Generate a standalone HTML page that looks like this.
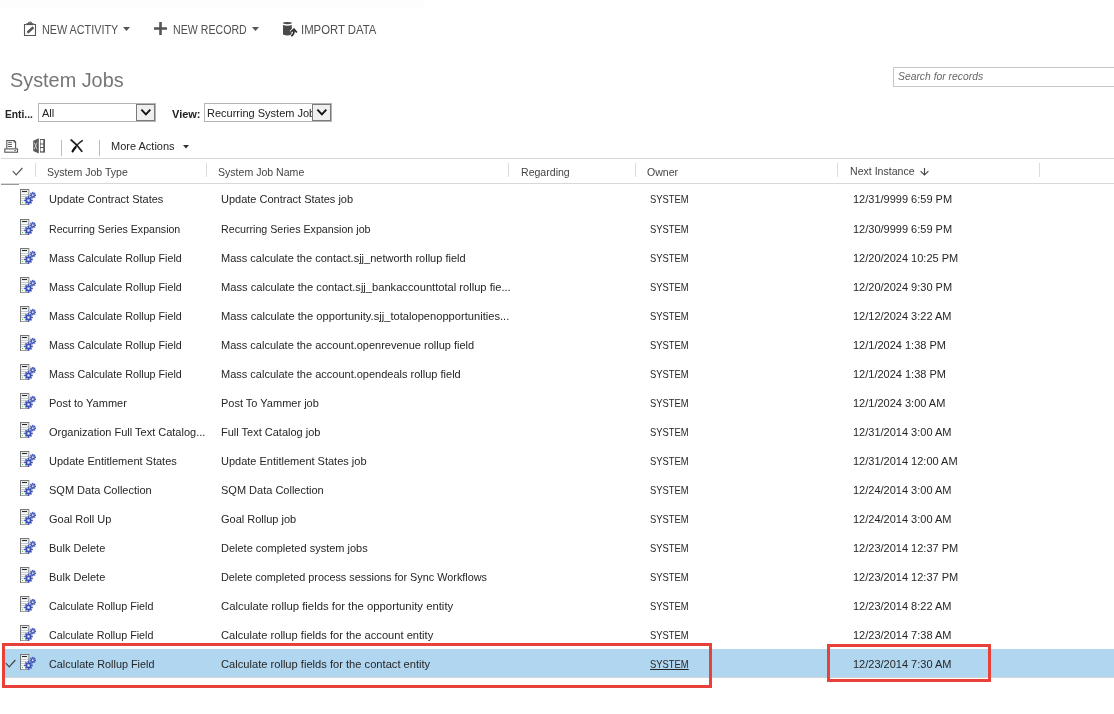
<!DOCTYPE html>
<html><head><meta charset="utf-8">
<style>
html,body{margin:0;padding:0;background:#fff;}
body{width:1114px;height:714px;position:relative;overflow:hidden;font-family:"Liberation Sans",sans-serif;}
.a{position:absolute;white-space:nowrap;}
.topband{position:absolute;left:0;top:0;width:424px;height:8px;background:#fdfdfd;}
.tb{position:absolute;top:24px;font-size:12px;color:#505050;line-height:13px;}
.title{position:absolute;left:10px;top:68px;font-size:21px;color:#767676;line-height:24px;transform:scaleX(0.945);transform-origin:0 0;white-space:nowrap}
.search{position:absolute;left:893px;top:67px;width:230px;height:20px;border:1px solid #c6c6c6;box-sizing:border-box;}
.search span{position:absolute;left:4px;top:2px;font-size:11px;font-style:italic;color:#666;transform:scaleX(0.94);transform-origin:0 0;white-space:nowrap}
.lbl{position:absolute;font-size:11px;font-weight:bold;color:#222;top:108px;}
.sel{position:absolute;top:103px;height:19px;border:1px solid #b4b4b4;box-sizing:border-box;background:#fff;}
.sel .v{position:absolute;left:3px;top:3px;font-size:11px;color:#222;white-space:nowrap;overflow:hidden;}
.sel .btn svg{display:block;position:absolute;left:0px;top:0px}
.sel .btn{position:absolute;right:0;top:0;width:19px;height:17px;border:1px solid #7a7a7a;background:#efefef;box-sizing:border-box;}
.hline{position:absolute;left:1px;width:1113px;height:1px;background:#d8d8d8;}
.hdr{position:absolute;top:166px;font-size:11px;color:#444;line-height:13px;transform:scaleX(0.96);transform-origin:0 0;white-space:nowrap}
.div{position:absolute;top:163px;width:1px;height:14px;background:#dcdcdc;}
.c{position:absolute;font-size:11px;color:#262626;line-height:13px;white-space:nowrap;}
.c1{left:49px;}
.c2{left:221px;}
.c4{left:650px;transform:scaleX(0.855);transform-origin:0 0;}
.c5{left:853px;}
.und{text-decoration:underline;}
.ic{position:absolute;left:20px;width:16px;height:16px;}
.ic svg{display:block;}
.selbg{position:absolute;left:2px;width:1112px;height:28px;background:#b1d6f0;box-shadow:0 1px 0 #d4d4d4;}
.rchk{position:absolute;left:5px;}
.red{position:absolute;border:3px solid #e8413a;box-sizing:border-box;}
</style></head><body><div style="position:absolute;left:0;top:0;width:1114px;height:714px;will-change:transform">
<div class="topband"></div>

<!-- toolbar -->
<svg class="a" style="left:20px;top:16px" width="20" height="24" viewBox="0 0 20 24">
<path d="M6.5 8.5H4.5V19.5H15.5V8.5H13.5" fill="none" stroke="#555" stroke-width="1.1"/>
<rect x="6.3" y="7.2" width="7.4" height="1.9" fill="#555"/><path d="M7.8 7.4a2.2 1.9 0 0 1 4.4 0z" fill="#555"/><rect x="9.5" y="5.8" width="1" height="1" fill="#ccc"/>
<path d="M7.6 16.5L13.4 11.3" stroke="#555" stroke-width="2.5"/><path d="M6.2 17.8L8.2 15.3L8.9 16.1z" fill="#555"/></svg>
<div class="tb" style="left:42px;transform:scaleX(0.9);transform-origin:0 0">NEW ACTIVITY</div>
<svg class="a" style="left:123px;top:27px" width="7" height="4" viewBox="0 0 7 4"><path d="M0 0h7L3.5 4z" fill="#555"/></svg>

<svg class="a" style="left:154px;top:22px" width="13" height="13" viewBox="0 0 13 13"><path d="M6.5 0v13M0 6.5h13" stroke="#555" stroke-width="2.6"/></svg>
<div class="tb" style="left:173px;transform:scaleX(0.885);transform-origin:0 0">NEW RECORD</div>
<svg class="a" style="left:252px;top:27px" width="7" height="4" viewBox="0 0 7 4"><path d="M0 0h7L3.5 4z" fill="#555"/></svg>

<svg class="a" style="left:278px;top:16px" width="24" height="24" viewBox="0 0 24 24">
<ellipse cx="9.4" cy="7.1" rx="4.5" ry="1.15" fill="#4a4a4a"/>
<path d="M5 9.0Q9.4 10.6 13.8 9.0V18.6Q9.4 20.4 5 18.6Z" fill="#4a4a4a"/>
<g fill="none" stroke="#fff" stroke-width="3.4" stroke-linejoin="round"><path d="M13.2 19.9Q16 19 16 14.2"/><path d="M12.8 16.2L16 13.2L18.9 16.5"/></g>
<g fill="none" stroke="#2a2a2a" stroke-width="1.7" stroke-linejoin="miter"><path d="M13.2 19.9Q16 19 16 14.2"/><path d="M12.8 16.2L16 13.2L18.9 16.5"/></g>
</svg>
<div class="tb" style="left:301px;transform:scaleX(0.945);transform-origin:0 0">IMPORT DATA</div>

<div class="title">System Jobs</div>
<div class="search"><span>Search for records</span></div>

<div class="lbl" style="left:5px;transform:scaleX(0.93);transform-origin:0 0">Enti...</div>
<div class="sel" style="left:38px;width:118px"><span class="v" style="left:3px">All</span><div class="btn"><svg width="17" height="17" viewBox="0 0 17 17"><path d="M4.4 4.6l4.5 4.7L13.3 4.6" fill="none" stroke="#111" stroke-width="1.9"/></svg></div></div>
<div class="lbl" style="left:172px">View:</div>
<div class="sel" style="left:204px;width:128px"><span class="v" style="left:2px;width:105px">Recurring System Job</span><div class="btn"><svg width="17" height="17" viewBox="0 0 17 17"><path d="M4.4 4.6l4.5 4.7L13.3 4.6" fill="none" stroke="#111" stroke-width="1.9"/></svg></div></div>

<!-- toolbar 2 -->
<svg class="a" style="left:0px;top:134px" width="50" height="24" viewBox="0 0 50 24">
<path d="M6.8 14.5V6.5h7.2l1.6 1.6v6.4" fill="none" stroke="#555" stroke-width="1.1"/>
<path d="M13.6 6.3h0.8l1.4 1.4v0.8h-2.2z" fill="#555"/>
<rect x="8.1" y="7.8" width="3.8" height="1" fill="#555"/><rect x="8.1" y="9.9" width="3.8" height="1" fill="#555"/><rect x="8.1" y="12" width="3.8" height="1" fill="#555"/>
<rect x="4.8" y="14.9" width="12.7" height="3.3" fill="none" stroke="#555" stroke-width="1.1"/><rect x="14.3" y="16.1" width="1.6" height="0.9" fill="#555"/>
<path d="M33.2 6.7L38.8 4.3V19.5L33.2 17z" fill="#5a5a5a"/>
<path d="M34.3 8.6l2.7 6.6M37 8.6l-2.7 6.6" stroke="#d0d0d0" stroke-width="0.9"/>
<rect x="40" y="5" width="5" height="13.6" fill="#5a5a5a"/><rect x="40.6" y="6" width="2.6" height="3.5" fill="#fff"/><rect x="40.6" y="10.5" width="2.6" height="2.5" fill="#fff"/><rect x="40.6" y="14" width="2.6" height="3.3" fill="#fff"/>
</svg>
<div class="a" style="left:61px;top:140px;width:1px;height:16px;background:#b8bcc8"></div>
<svg class="a" style="left:64px;top:134px" width="26" height="24" viewBox="0 0 26 24"><path d="M7.2 6Q13.2 10.6 17.8 17.2" fill="none" stroke="#222" stroke-width="1.8" stroke-linecap="round"/><path d="M18.3 6.6Q11.5 11.2 8.6 17.4" fill="none" stroke="#222" stroke-width="1.5" stroke-linecap="round"/><path d="M11.5 13.5Q9.5 15.5 8.6 17.4" fill="none" stroke="#111" stroke-width="2.2" stroke-linecap="round"/></svg>
<div class="a" style="left:99px;top:140px;width:1px;height:16px;background:#b8bcc8"></div>
<div class="a" style="left:111px;top:140px;font-size:11px;color:#262626;line-height:13px">More Actions</div>
<svg class="a" style="left:183px;top:145px" width="6" height="4" viewBox="0 0 6 4"><path d="M0 0h6L3 3.5z" fill="#333"/></svg>
<svg class="a" style="left:12px;top:167px" width="11" height="9" viewBox="0 0 11 9"><path d="M0.8 4.2l3.4 3.6L10.4 1" fill="none" stroke="#555" stroke-width="1.2"/></svg>
<svg class="a" style="left:919px;top:167px" width="11" height="9" viewBox="0 0 11 9"><path d="M5.5 1v6.8M1.6 4.2l3.9 3.8 3.9-3.8" fill="none" stroke="#444" stroke-width="1.1"/></svg>
<div class="a" style="left:1px;top:183px;width:18px;height:2px;background:#999"></div>
<div class="hline" style="top:158px"></div>
<div class="hline" style="top:183px"></div>

<div class="hdr" style="left:47px">System Job Type</div>
<div class="hdr" style="left:218px">System Job Name</div>
<div class="hdr" style="left:521px">Regarding</div>
<div class="hdr" style="left:647px">Owner</div>
<div class="hdr" style="left:850px;top:165px">Next Instance</div>
<div class="div" style="left:35px"></div>
<div class="div" style="left:206px"></div>
<div class="div" style="left:508px"></div>
<div class="div" style="left:635px"></div>
<div class="div" style="left:837px"></div>
<div class="div" style="left:1039px"></div>

<div class="ic" style="top:189px"><svg width="16" height="16" viewBox="0 0 16 16"><rect x="0.5" y="0.5" width="8.3" height="15.3" fill="#fbfbfb" stroke="#777"/><rect x="1" y="1" width="7.3" height="3" fill="#e4eaee"/><rect x="2" y="2" width="5" height="1" fill="#2a2a2a"/><rect x="1" y="5" width="7.3" height="1" fill="#c2c9d0"/><rect x="1" y="7" width="7.3" height="1" fill="#c2c9d0"/><rect x="1" y="9" width="7.3" height="1" fill="#c2c9d0"/><rect x="1" y="11" width="7.3" height="1" fill="#cdd2d6"/><rect x="2" y="13" width="1" height="1" fill="#3c4"/><line x1="14.40" y1="6.20" x2="15.40" y2="6.20" stroke="#5566c4" stroke-width="1.0"/><circle cx="15.40" cy="6.20" r="0.75" fill="#3a4fb0"/><line x1="13.93" y1="7.33" x2="14.64" y2="8.04" stroke="#5566c4" stroke-width="1.0"/><circle cx="14.64" cy="8.04" r="0.75" fill="#3a4fb0"/><line x1="12.80" y1="7.80" x2="12.80" y2="8.80" stroke="#5566c4" stroke-width="1.0"/><circle cx="12.80" cy="8.80" r="0.75" fill="#3a4fb0"/><line x1="11.67" y1="7.33" x2="10.96" y2="8.04" stroke="#5566c4" stroke-width="1.0"/><circle cx="10.96" cy="8.04" r="0.75" fill="#3a4fb0"/><line x1="11.20" y1="6.20" x2="10.20" y2="6.20" stroke="#5566c4" stroke-width="1.0"/><circle cx="10.20" cy="6.20" r="0.75" fill="#3a4fb0"/><line x1="11.67" y1="5.07" x2="10.96" y2="4.36" stroke="#5566c4" stroke-width="1.0"/><circle cx="10.96" cy="4.36" r="0.75" fill="#3a4fb0"/><line x1="12.80" y1="4.60" x2="12.80" y2="3.60" stroke="#5566c4" stroke-width="1.0"/><circle cx="12.80" cy="3.60" r="0.75" fill="#3a4fb0"/><line x1="13.93" y1="5.07" x2="14.64" y2="4.36" stroke="#5566c4" stroke-width="1.0"/><circle cx="14.64" cy="4.36" r="0.75" fill="#3a4fb0"/><circle cx="12.8" cy="6.2" r="1.6" fill="#9ca9e4" stroke="#3a4fb0" stroke-width="1.0"/><circle cx="12.8" cy="6.2" r="0.6" fill="#fff"/><line x1="10.80" y1="11.40" x2="12.00" y2="11.40" stroke="#5566c4" stroke-width="1.0"/><circle cx="12.00" cy="11.40" r="0.9" fill="#3a4fb0"/><line x1="10.13" y1="13.03" x2="10.97" y2="13.87" stroke="#5566c4" stroke-width="1.0"/><circle cx="10.97" cy="13.87" r="0.9" fill="#3a4fb0"/><line x1="8.50" y1="13.70" x2="8.50" y2="14.90" stroke="#5566c4" stroke-width="1.0"/><circle cx="8.50" cy="14.90" r="0.9" fill="#3a4fb0"/><line x1="6.87" y1="13.03" x2="6.03" y2="13.87" stroke="#5566c4" stroke-width="1.0"/><circle cx="6.03" cy="13.87" r="0.9" fill="#3a4fb0"/><line x1="6.20" y1="11.40" x2="5.00" y2="11.40" stroke="#5566c4" stroke-width="1.0"/><circle cx="5.00" cy="11.40" r="0.9" fill="#3a4fb0"/><line x1="6.87" y1="9.77" x2="6.03" y2="8.93" stroke="#5566c4" stroke-width="1.0"/><circle cx="6.03" cy="8.93" r="0.9" fill="#3a4fb0"/><line x1="8.50" y1="9.10" x2="8.50" y2="7.90" stroke="#5566c4" stroke-width="1.0"/><circle cx="8.50" cy="7.90" r="0.9" fill="#3a4fb0"/><line x1="10.13" y1="9.77" x2="10.97" y2="8.93" stroke="#5566c4" stroke-width="1.0"/><circle cx="10.97" cy="8.93" r="0.9" fill="#3a4fb0"/><circle cx="8.5" cy="11.4" r="2.3" fill="#95a3e2" stroke="#3a4fb0" stroke-width="1.3"/><circle cx="8.5" cy="11.4" r="0.75" fill="#fff"/></svg></div>
<div class="c c1" style="top:193px">Update Contract States</div>
<div class="c c2" style="top:193px">Update Contract States job</div>
<div class="c c4" style="top:193px">SYSTEM</div>
<div class="c c5" style="top:193px">12/31/9999 6:59 PM</div>
<div class="ic" style="top:219px"><svg width="16" height="16" viewBox="0 0 16 16"><rect x="0.5" y="0.5" width="8.3" height="15.3" fill="#fbfbfb" stroke="#777"/><rect x="1" y="1" width="7.3" height="3" fill="#e4eaee"/><rect x="2" y="2" width="5" height="1" fill="#2a2a2a"/><rect x="1" y="5" width="7.3" height="1" fill="#c2c9d0"/><rect x="1" y="7" width="7.3" height="1" fill="#c2c9d0"/><rect x="1" y="9" width="7.3" height="1" fill="#c2c9d0"/><rect x="1" y="11" width="7.3" height="1" fill="#cdd2d6"/><rect x="2" y="13" width="1" height="1" fill="#3c4"/><line x1="14.40" y1="6.20" x2="15.40" y2="6.20" stroke="#5566c4" stroke-width="1.0"/><circle cx="15.40" cy="6.20" r="0.75" fill="#3a4fb0"/><line x1="13.93" y1="7.33" x2="14.64" y2="8.04" stroke="#5566c4" stroke-width="1.0"/><circle cx="14.64" cy="8.04" r="0.75" fill="#3a4fb0"/><line x1="12.80" y1="7.80" x2="12.80" y2="8.80" stroke="#5566c4" stroke-width="1.0"/><circle cx="12.80" cy="8.80" r="0.75" fill="#3a4fb0"/><line x1="11.67" y1="7.33" x2="10.96" y2="8.04" stroke="#5566c4" stroke-width="1.0"/><circle cx="10.96" cy="8.04" r="0.75" fill="#3a4fb0"/><line x1="11.20" y1="6.20" x2="10.20" y2="6.20" stroke="#5566c4" stroke-width="1.0"/><circle cx="10.20" cy="6.20" r="0.75" fill="#3a4fb0"/><line x1="11.67" y1="5.07" x2="10.96" y2="4.36" stroke="#5566c4" stroke-width="1.0"/><circle cx="10.96" cy="4.36" r="0.75" fill="#3a4fb0"/><line x1="12.80" y1="4.60" x2="12.80" y2="3.60" stroke="#5566c4" stroke-width="1.0"/><circle cx="12.80" cy="3.60" r="0.75" fill="#3a4fb0"/><line x1="13.93" y1="5.07" x2="14.64" y2="4.36" stroke="#5566c4" stroke-width="1.0"/><circle cx="14.64" cy="4.36" r="0.75" fill="#3a4fb0"/><circle cx="12.8" cy="6.2" r="1.6" fill="#9ca9e4" stroke="#3a4fb0" stroke-width="1.0"/><circle cx="12.8" cy="6.2" r="0.6" fill="#fff"/><line x1="10.80" y1="11.40" x2="12.00" y2="11.40" stroke="#5566c4" stroke-width="1.0"/><circle cx="12.00" cy="11.40" r="0.9" fill="#3a4fb0"/><line x1="10.13" y1="13.03" x2="10.97" y2="13.87" stroke="#5566c4" stroke-width="1.0"/><circle cx="10.97" cy="13.87" r="0.9" fill="#3a4fb0"/><line x1="8.50" y1="13.70" x2="8.50" y2="14.90" stroke="#5566c4" stroke-width="1.0"/><circle cx="8.50" cy="14.90" r="0.9" fill="#3a4fb0"/><line x1="6.87" y1="13.03" x2="6.03" y2="13.87" stroke="#5566c4" stroke-width="1.0"/><circle cx="6.03" cy="13.87" r="0.9" fill="#3a4fb0"/><line x1="6.20" y1="11.40" x2="5.00" y2="11.40" stroke="#5566c4" stroke-width="1.0"/><circle cx="5.00" cy="11.40" r="0.9" fill="#3a4fb0"/><line x1="6.87" y1="9.77" x2="6.03" y2="8.93" stroke="#5566c4" stroke-width="1.0"/><circle cx="6.03" cy="8.93" r="0.9" fill="#3a4fb0"/><line x1="8.50" y1="9.10" x2="8.50" y2="7.90" stroke="#5566c4" stroke-width="1.0"/><circle cx="8.50" cy="7.90" r="0.9" fill="#3a4fb0"/><line x1="10.13" y1="9.77" x2="10.97" y2="8.93" stroke="#5566c4" stroke-width="1.0"/><circle cx="10.97" cy="8.93" r="0.9" fill="#3a4fb0"/><circle cx="8.5" cy="11.4" r="2.3" fill="#95a3e2" stroke="#3a4fb0" stroke-width="1.3"/><circle cx="8.5" cy="11.4" r="0.75" fill="#fff"/></svg></div>
<div class="c c1" style="top:223px;transform:scaleX(0.9627);transform-origin:0 0">Recurring Series Expansion</div>
<div class="c c2" style="top:223px;transform:scaleX(0.9704);transform-origin:0 0">Recurring Series Expansion job</div>
<div class="c c4" style="top:223px">SYSTEM</div>
<div class="c c5" style="top:223px">12/30/9999 6:59 PM</div>
<div class="ic" style="top:248px"><svg width="16" height="16" viewBox="0 0 16 16"><rect x="0.5" y="0.5" width="8.3" height="15.3" fill="#fbfbfb" stroke="#777"/><rect x="1" y="1" width="7.3" height="3" fill="#e4eaee"/><rect x="2" y="2" width="5" height="1" fill="#2a2a2a"/><rect x="1" y="5" width="7.3" height="1" fill="#c2c9d0"/><rect x="1" y="7" width="7.3" height="1" fill="#c2c9d0"/><rect x="1" y="9" width="7.3" height="1" fill="#c2c9d0"/><rect x="1" y="11" width="7.3" height="1" fill="#cdd2d6"/><rect x="2" y="13" width="1" height="1" fill="#3c4"/><line x1="14.40" y1="6.20" x2="15.40" y2="6.20" stroke="#5566c4" stroke-width="1.0"/><circle cx="15.40" cy="6.20" r="0.75" fill="#3a4fb0"/><line x1="13.93" y1="7.33" x2="14.64" y2="8.04" stroke="#5566c4" stroke-width="1.0"/><circle cx="14.64" cy="8.04" r="0.75" fill="#3a4fb0"/><line x1="12.80" y1="7.80" x2="12.80" y2="8.80" stroke="#5566c4" stroke-width="1.0"/><circle cx="12.80" cy="8.80" r="0.75" fill="#3a4fb0"/><line x1="11.67" y1="7.33" x2="10.96" y2="8.04" stroke="#5566c4" stroke-width="1.0"/><circle cx="10.96" cy="8.04" r="0.75" fill="#3a4fb0"/><line x1="11.20" y1="6.20" x2="10.20" y2="6.20" stroke="#5566c4" stroke-width="1.0"/><circle cx="10.20" cy="6.20" r="0.75" fill="#3a4fb0"/><line x1="11.67" y1="5.07" x2="10.96" y2="4.36" stroke="#5566c4" stroke-width="1.0"/><circle cx="10.96" cy="4.36" r="0.75" fill="#3a4fb0"/><line x1="12.80" y1="4.60" x2="12.80" y2="3.60" stroke="#5566c4" stroke-width="1.0"/><circle cx="12.80" cy="3.60" r="0.75" fill="#3a4fb0"/><line x1="13.93" y1="5.07" x2="14.64" y2="4.36" stroke="#5566c4" stroke-width="1.0"/><circle cx="14.64" cy="4.36" r="0.75" fill="#3a4fb0"/><circle cx="12.8" cy="6.2" r="1.6" fill="#9ca9e4" stroke="#3a4fb0" stroke-width="1.0"/><circle cx="12.8" cy="6.2" r="0.6" fill="#fff"/><line x1="10.80" y1="11.40" x2="12.00" y2="11.40" stroke="#5566c4" stroke-width="1.0"/><circle cx="12.00" cy="11.40" r="0.9" fill="#3a4fb0"/><line x1="10.13" y1="13.03" x2="10.97" y2="13.87" stroke="#5566c4" stroke-width="1.0"/><circle cx="10.97" cy="13.87" r="0.9" fill="#3a4fb0"/><line x1="8.50" y1="13.70" x2="8.50" y2="14.90" stroke="#5566c4" stroke-width="1.0"/><circle cx="8.50" cy="14.90" r="0.9" fill="#3a4fb0"/><line x1="6.87" y1="13.03" x2="6.03" y2="13.87" stroke="#5566c4" stroke-width="1.0"/><circle cx="6.03" cy="13.87" r="0.9" fill="#3a4fb0"/><line x1="6.20" y1="11.40" x2="5.00" y2="11.40" stroke="#5566c4" stroke-width="1.0"/><circle cx="5.00" cy="11.40" r="0.9" fill="#3a4fb0"/><line x1="6.87" y1="9.77" x2="6.03" y2="8.93" stroke="#5566c4" stroke-width="1.0"/><circle cx="6.03" cy="8.93" r="0.9" fill="#3a4fb0"/><line x1="8.50" y1="9.10" x2="8.50" y2="7.90" stroke="#5566c4" stroke-width="1.0"/><circle cx="8.50" cy="7.90" r="0.9" fill="#3a4fb0"/><line x1="10.13" y1="9.77" x2="10.97" y2="8.93" stroke="#5566c4" stroke-width="1.0"/><circle cx="10.97" cy="8.93" r="0.9" fill="#3a4fb0"/><circle cx="8.5" cy="11.4" r="2.3" fill="#95a3e2" stroke="#3a4fb0" stroke-width="1.3"/><circle cx="8.5" cy="11.4" r="0.75" fill="#fff"/></svg></div>
<div class="c c1" style="top:252px;transform:scaleX(0.9739);transform-origin:0 0">Mass Calculate Rollup Field</div>
<div class="c c2" style="top:252px">Mass calculate the contact.sjj_networth rollup field</div>
<div class="c c4" style="top:252px">SYSTEM</div>
<div class="c c5" style="top:252px">12/20/2024 10:25 PM</div>
<div class="ic" style="top:277px"><svg width="16" height="16" viewBox="0 0 16 16"><rect x="0.5" y="0.5" width="8.3" height="15.3" fill="#fbfbfb" stroke="#777"/><rect x="1" y="1" width="7.3" height="3" fill="#e4eaee"/><rect x="2" y="2" width="5" height="1" fill="#2a2a2a"/><rect x="1" y="5" width="7.3" height="1" fill="#c2c9d0"/><rect x="1" y="7" width="7.3" height="1" fill="#c2c9d0"/><rect x="1" y="9" width="7.3" height="1" fill="#c2c9d0"/><rect x="1" y="11" width="7.3" height="1" fill="#cdd2d6"/><rect x="2" y="13" width="1" height="1" fill="#3c4"/><line x1="14.40" y1="6.20" x2="15.40" y2="6.20" stroke="#5566c4" stroke-width="1.0"/><circle cx="15.40" cy="6.20" r="0.75" fill="#3a4fb0"/><line x1="13.93" y1="7.33" x2="14.64" y2="8.04" stroke="#5566c4" stroke-width="1.0"/><circle cx="14.64" cy="8.04" r="0.75" fill="#3a4fb0"/><line x1="12.80" y1="7.80" x2="12.80" y2="8.80" stroke="#5566c4" stroke-width="1.0"/><circle cx="12.80" cy="8.80" r="0.75" fill="#3a4fb0"/><line x1="11.67" y1="7.33" x2="10.96" y2="8.04" stroke="#5566c4" stroke-width="1.0"/><circle cx="10.96" cy="8.04" r="0.75" fill="#3a4fb0"/><line x1="11.20" y1="6.20" x2="10.20" y2="6.20" stroke="#5566c4" stroke-width="1.0"/><circle cx="10.20" cy="6.20" r="0.75" fill="#3a4fb0"/><line x1="11.67" y1="5.07" x2="10.96" y2="4.36" stroke="#5566c4" stroke-width="1.0"/><circle cx="10.96" cy="4.36" r="0.75" fill="#3a4fb0"/><line x1="12.80" y1="4.60" x2="12.80" y2="3.60" stroke="#5566c4" stroke-width="1.0"/><circle cx="12.80" cy="3.60" r="0.75" fill="#3a4fb0"/><line x1="13.93" y1="5.07" x2="14.64" y2="4.36" stroke="#5566c4" stroke-width="1.0"/><circle cx="14.64" cy="4.36" r="0.75" fill="#3a4fb0"/><circle cx="12.8" cy="6.2" r="1.6" fill="#9ca9e4" stroke="#3a4fb0" stroke-width="1.0"/><circle cx="12.8" cy="6.2" r="0.6" fill="#fff"/><line x1="10.80" y1="11.40" x2="12.00" y2="11.40" stroke="#5566c4" stroke-width="1.0"/><circle cx="12.00" cy="11.40" r="0.9" fill="#3a4fb0"/><line x1="10.13" y1="13.03" x2="10.97" y2="13.87" stroke="#5566c4" stroke-width="1.0"/><circle cx="10.97" cy="13.87" r="0.9" fill="#3a4fb0"/><line x1="8.50" y1="13.70" x2="8.50" y2="14.90" stroke="#5566c4" stroke-width="1.0"/><circle cx="8.50" cy="14.90" r="0.9" fill="#3a4fb0"/><line x1="6.87" y1="13.03" x2="6.03" y2="13.87" stroke="#5566c4" stroke-width="1.0"/><circle cx="6.03" cy="13.87" r="0.9" fill="#3a4fb0"/><line x1="6.20" y1="11.40" x2="5.00" y2="11.40" stroke="#5566c4" stroke-width="1.0"/><circle cx="5.00" cy="11.40" r="0.9" fill="#3a4fb0"/><line x1="6.87" y1="9.77" x2="6.03" y2="8.93" stroke="#5566c4" stroke-width="1.0"/><circle cx="6.03" cy="8.93" r="0.9" fill="#3a4fb0"/><line x1="8.50" y1="9.10" x2="8.50" y2="7.90" stroke="#5566c4" stroke-width="1.0"/><circle cx="8.50" cy="7.90" r="0.9" fill="#3a4fb0"/><line x1="10.13" y1="9.77" x2="10.97" y2="8.93" stroke="#5566c4" stroke-width="1.0"/><circle cx="10.97" cy="8.93" r="0.9" fill="#3a4fb0"/><circle cx="8.5" cy="11.4" r="2.3" fill="#95a3e2" stroke="#3a4fb0" stroke-width="1.3"/><circle cx="8.5" cy="11.4" r="0.75" fill="#fff"/></svg></div>
<div class="c c1" style="top:281px;transform:scaleX(0.9739);transform-origin:0 0">Mass Calculate Rollup Field</div>
<div class="c c2" style="top:281px;transform:scaleX(1.0124);transform-origin:0 0">Mass calculate the contact.sjj_bankaccounttotal rollup fie...</div>
<div class="c c4" style="top:281px">SYSTEM</div>
<div class="c c5" style="top:281px">12/20/2024 9:30 PM</div>
<div class="ic" style="top:306px"><svg width="16" height="16" viewBox="0 0 16 16"><rect x="0.5" y="0.5" width="8.3" height="15.3" fill="#fbfbfb" stroke="#777"/><rect x="1" y="1" width="7.3" height="3" fill="#e4eaee"/><rect x="2" y="2" width="5" height="1" fill="#2a2a2a"/><rect x="1" y="5" width="7.3" height="1" fill="#c2c9d0"/><rect x="1" y="7" width="7.3" height="1" fill="#c2c9d0"/><rect x="1" y="9" width="7.3" height="1" fill="#c2c9d0"/><rect x="1" y="11" width="7.3" height="1" fill="#cdd2d6"/><rect x="2" y="13" width="1" height="1" fill="#3c4"/><line x1="14.40" y1="6.20" x2="15.40" y2="6.20" stroke="#5566c4" stroke-width="1.0"/><circle cx="15.40" cy="6.20" r="0.75" fill="#3a4fb0"/><line x1="13.93" y1="7.33" x2="14.64" y2="8.04" stroke="#5566c4" stroke-width="1.0"/><circle cx="14.64" cy="8.04" r="0.75" fill="#3a4fb0"/><line x1="12.80" y1="7.80" x2="12.80" y2="8.80" stroke="#5566c4" stroke-width="1.0"/><circle cx="12.80" cy="8.80" r="0.75" fill="#3a4fb0"/><line x1="11.67" y1="7.33" x2="10.96" y2="8.04" stroke="#5566c4" stroke-width="1.0"/><circle cx="10.96" cy="8.04" r="0.75" fill="#3a4fb0"/><line x1="11.20" y1="6.20" x2="10.20" y2="6.20" stroke="#5566c4" stroke-width="1.0"/><circle cx="10.20" cy="6.20" r="0.75" fill="#3a4fb0"/><line x1="11.67" y1="5.07" x2="10.96" y2="4.36" stroke="#5566c4" stroke-width="1.0"/><circle cx="10.96" cy="4.36" r="0.75" fill="#3a4fb0"/><line x1="12.80" y1="4.60" x2="12.80" y2="3.60" stroke="#5566c4" stroke-width="1.0"/><circle cx="12.80" cy="3.60" r="0.75" fill="#3a4fb0"/><line x1="13.93" y1="5.07" x2="14.64" y2="4.36" stroke="#5566c4" stroke-width="1.0"/><circle cx="14.64" cy="4.36" r="0.75" fill="#3a4fb0"/><circle cx="12.8" cy="6.2" r="1.6" fill="#9ca9e4" stroke="#3a4fb0" stroke-width="1.0"/><circle cx="12.8" cy="6.2" r="0.6" fill="#fff"/><line x1="10.80" y1="11.40" x2="12.00" y2="11.40" stroke="#5566c4" stroke-width="1.0"/><circle cx="12.00" cy="11.40" r="0.9" fill="#3a4fb0"/><line x1="10.13" y1="13.03" x2="10.97" y2="13.87" stroke="#5566c4" stroke-width="1.0"/><circle cx="10.97" cy="13.87" r="0.9" fill="#3a4fb0"/><line x1="8.50" y1="13.70" x2="8.50" y2="14.90" stroke="#5566c4" stroke-width="1.0"/><circle cx="8.50" cy="14.90" r="0.9" fill="#3a4fb0"/><line x1="6.87" y1="13.03" x2="6.03" y2="13.87" stroke="#5566c4" stroke-width="1.0"/><circle cx="6.03" cy="13.87" r="0.9" fill="#3a4fb0"/><line x1="6.20" y1="11.40" x2="5.00" y2="11.40" stroke="#5566c4" stroke-width="1.0"/><circle cx="5.00" cy="11.40" r="0.9" fill="#3a4fb0"/><line x1="6.87" y1="9.77" x2="6.03" y2="8.93" stroke="#5566c4" stroke-width="1.0"/><circle cx="6.03" cy="8.93" r="0.9" fill="#3a4fb0"/><line x1="8.50" y1="9.10" x2="8.50" y2="7.90" stroke="#5566c4" stroke-width="1.0"/><circle cx="8.50" cy="7.90" r="0.9" fill="#3a4fb0"/><line x1="10.13" y1="9.77" x2="10.97" y2="8.93" stroke="#5566c4" stroke-width="1.0"/><circle cx="10.97" cy="8.93" r="0.9" fill="#3a4fb0"/><circle cx="8.5" cy="11.4" r="2.3" fill="#95a3e2" stroke="#3a4fb0" stroke-width="1.3"/><circle cx="8.5" cy="11.4" r="0.75" fill="#fff"/></svg></div>
<div class="c c1" style="top:310px;transform:scaleX(0.9739);transform-origin:0 0">Mass Calculate Rollup Field</div>
<div class="c c2" style="top:310px;transform:scaleX(1.0124);transform-origin:0 0">Mass calculate the opportunity.sjj_totalopenopportunities...</div>
<div class="c c4" style="top:310px">SYSTEM</div>
<div class="c c5" style="top:310px">12/12/2024 3:22 AM</div>
<div class="ic" style="top:335px"><svg width="16" height="16" viewBox="0 0 16 16"><rect x="0.5" y="0.5" width="8.3" height="15.3" fill="#fbfbfb" stroke="#777"/><rect x="1" y="1" width="7.3" height="3" fill="#e4eaee"/><rect x="2" y="2" width="5" height="1" fill="#2a2a2a"/><rect x="1" y="5" width="7.3" height="1" fill="#c2c9d0"/><rect x="1" y="7" width="7.3" height="1" fill="#c2c9d0"/><rect x="1" y="9" width="7.3" height="1" fill="#c2c9d0"/><rect x="1" y="11" width="7.3" height="1" fill="#cdd2d6"/><rect x="2" y="13" width="1" height="1" fill="#3c4"/><line x1="14.40" y1="6.20" x2="15.40" y2="6.20" stroke="#5566c4" stroke-width="1.0"/><circle cx="15.40" cy="6.20" r="0.75" fill="#3a4fb0"/><line x1="13.93" y1="7.33" x2="14.64" y2="8.04" stroke="#5566c4" stroke-width="1.0"/><circle cx="14.64" cy="8.04" r="0.75" fill="#3a4fb0"/><line x1="12.80" y1="7.80" x2="12.80" y2="8.80" stroke="#5566c4" stroke-width="1.0"/><circle cx="12.80" cy="8.80" r="0.75" fill="#3a4fb0"/><line x1="11.67" y1="7.33" x2="10.96" y2="8.04" stroke="#5566c4" stroke-width="1.0"/><circle cx="10.96" cy="8.04" r="0.75" fill="#3a4fb0"/><line x1="11.20" y1="6.20" x2="10.20" y2="6.20" stroke="#5566c4" stroke-width="1.0"/><circle cx="10.20" cy="6.20" r="0.75" fill="#3a4fb0"/><line x1="11.67" y1="5.07" x2="10.96" y2="4.36" stroke="#5566c4" stroke-width="1.0"/><circle cx="10.96" cy="4.36" r="0.75" fill="#3a4fb0"/><line x1="12.80" y1="4.60" x2="12.80" y2="3.60" stroke="#5566c4" stroke-width="1.0"/><circle cx="12.80" cy="3.60" r="0.75" fill="#3a4fb0"/><line x1="13.93" y1="5.07" x2="14.64" y2="4.36" stroke="#5566c4" stroke-width="1.0"/><circle cx="14.64" cy="4.36" r="0.75" fill="#3a4fb0"/><circle cx="12.8" cy="6.2" r="1.6" fill="#9ca9e4" stroke="#3a4fb0" stroke-width="1.0"/><circle cx="12.8" cy="6.2" r="0.6" fill="#fff"/><line x1="10.80" y1="11.40" x2="12.00" y2="11.40" stroke="#5566c4" stroke-width="1.0"/><circle cx="12.00" cy="11.40" r="0.9" fill="#3a4fb0"/><line x1="10.13" y1="13.03" x2="10.97" y2="13.87" stroke="#5566c4" stroke-width="1.0"/><circle cx="10.97" cy="13.87" r="0.9" fill="#3a4fb0"/><line x1="8.50" y1="13.70" x2="8.50" y2="14.90" stroke="#5566c4" stroke-width="1.0"/><circle cx="8.50" cy="14.90" r="0.9" fill="#3a4fb0"/><line x1="6.87" y1="13.03" x2="6.03" y2="13.87" stroke="#5566c4" stroke-width="1.0"/><circle cx="6.03" cy="13.87" r="0.9" fill="#3a4fb0"/><line x1="6.20" y1="11.40" x2="5.00" y2="11.40" stroke="#5566c4" stroke-width="1.0"/><circle cx="5.00" cy="11.40" r="0.9" fill="#3a4fb0"/><line x1="6.87" y1="9.77" x2="6.03" y2="8.93" stroke="#5566c4" stroke-width="1.0"/><circle cx="6.03" cy="8.93" r="0.9" fill="#3a4fb0"/><line x1="8.50" y1="9.10" x2="8.50" y2="7.90" stroke="#5566c4" stroke-width="1.0"/><circle cx="8.50" cy="7.90" r="0.9" fill="#3a4fb0"/><line x1="10.13" y1="9.77" x2="10.97" y2="8.93" stroke="#5566c4" stroke-width="1.0"/><circle cx="10.97" cy="8.93" r="0.9" fill="#3a4fb0"/><circle cx="8.5" cy="11.4" r="2.3" fill="#95a3e2" stroke="#3a4fb0" stroke-width="1.3"/><circle cx="8.5" cy="11.4" r="0.75" fill="#fff"/></svg></div>
<div class="c c1" style="top:339px;transform:scaleX(0.9739);transform-origin:0 0">Mass Calculate Rollup Field</div>
<div class="c c2" style="top:339px">Mass calculate the account.openrevenue rollup field</div>
<div class="c c4" style="top:339px">SYSTEM</div>
<div class="c c5" style="top:339px">12/1/2024 1:38 PM</div>
<div class="ic" style="top:364px"><svg width="16" height="16" viewBox="0 0 16 16"><rect x="0.5" y="0.5" width="8.3" height="15.3" fill="#fbfbfb" stroke="#777"/><rect x="1" y="1" width="7.3" height="3" fill="#e4eaee"/><rect x="2" y="2" width="5" height="1" fill="#2a2a2a"/><rect x="1" y="5" width="7.3" height="1" fill="#c2c9d0"/><rect x="1" y="7" width="7.3" height="1" fill="#c2c9d0"/><rect x="1" y="9" width="7.3" height="1" fill="#c2c9d0"/><rect x="1" y="11" width="7.3" height="1" fill="#cdd2d6"/><rect x="2" y="13" width="1" height="1" fill="#3c4"/><line x1="14.40" y1="6.20" x2="15.40" y2="6.20" stroke="#5566c4" stroke-width="1.0"/><circle cx="15.40" cy="6.20" r="0.75" fill="#3a4fb0"/><line x1="13.93" y1="7.33" x2="14.64" y2="8.04" stroke="#5566c4" stroke-width="1.0"/><circle cx="14.64" cy="8.04" r="0.75" fill="#3a4fb0"/><line x1="12.80" y1="7.80" x2="12.80" y2="8.80" stroke="#5566c4" stroke-width="1.0"/><circle cx="12.80" cy="8.80" r="0.75" fill="#3a4fb0"/><line x1="11.67" y1="7.33" x2="10.96" y2="8.04" stroke="#5566c4" stroke-width="1.0"/><circle cx="10.96" cy="8.04" r="0.75" fill="#3a4fb0"/><line x1="11.20" y1="6.20" x2="10.20" y2="6.20" stroke="#5566c4" stroke-width="1.0"/><circle cx="10.20" cy="6.20" r="0.75" fill="#3a4fb0"/><line x1="11.67" y1="5.07" x2="10.96" y2="4.36" stroke="#5566c4" stroke-width="1.0"/><circle cx="10.96" cy="4.36" r="0.75" fill="#3a4fb0"/><line x1="12.80" y1="4.60" x2="12.80" y2="3.60" stroke="#5566c4" stroke-width="1.0"/><circle cx="12.80" cy="3.60" r="0.75" fill="#3a4fb0"/><line x1="13.93" y1="5.07" x2="14.64" y2="4.36" stroke="#5566c4" stroke-width="1.0"/><circle cx="14.64" cy="4.36" r="0.75" fill="#3a4fb0"/><circle cx="12.8" cy="6.2" r="1.6" fill="#9ca9e4" stroke="#3a4fb0" stroke-width="1.0"/><circle cx="12.8" cy="6.2" r="0.6" fill="#fff"/><line x1="10.80" y1="11.40" x2="12.00" y2="11.40" stroke="#5566c4" stroke-width="1.0"/><circle cx="12.00" cy="11.40" r="0.9" fill="#3a4fb0"/><line x1="10.13" y1="13.03" x2="10.97" y2="13.87" stroke="#5566c4" stroke-width="1.0"/><circle cx="10.97" cy="13.87" r="0.9" fill="#3a4fb0"/><line x1="8.50" y1="13.70" x2="8.50" y2="14.90" stroke="#5566c4" stroke-width="1.0"/><circle cx="8.50" cy="14.90" r="0.9" fill="#3a4fb0"/><line x1="6.87" y1="13.03" x2="6.03" y2="13.87" stroke="#5566c4" stroke-width="1.0"/><circle cx="6.03" cy="13.87" r="0.9" fill="#3a4fb0"/><line x1="6.20" y1="11.40" x2="5.00" y2="11.40" stroke="#5566c4" stroke-width="1.0"/><circle cx="5.00" cy="11.40" r="0.9" fill="#3a4fb0"/><line x1="6.87" y1="9.77" x2="6.03" y2="8.93" stroke="#5566c4" stroke-width="1.0"/><circle cx="6.03" cy="8.93" r="0.9" fill="#3a4fb0"/><line x1="8.50" y1="9.10" x2="8.50" y2="7.90" stroke="#5566c4" stroke-width="1.0"/><circle cx="8.50" cy="7.90" r="0.9" fill="#3a4fb0"/><line x1="10.13" y1="9.77" x2="10.97" y2="8.93" stroke="#5566c4" stroke-width="1.0"/><circle cx="10.97" cy="8.93" r="0.9" fill="#3a4fb0"/><circle cx="8.5" cy="11.4" r="2.3" fill="#95a3e2" stroke="#3a4fb0" stroke-width="1.3"/><circle cx="8.5" cy="11.4" r="0.75" fill="#fff"/></svg></div>
<div class="c c1" style="top:368px;transform:scaleX(0.9739);transform-origin:0 0">Mass Calculate Rollup Field</div>
<div class="c c2" style="top:368px">Mass calculate the account.opendeals rollup field</div>
<div class="c c4" style="top:368px">SYSTEM</div>
<div class="c c5" style="top:368px">12/1/2024 1:38 PM</div>
<div class="ic" style="top:393px"><svg width="16" height="16" viewBox="0 0 16 16"><rect x="0.5" y="0.5" width="8.3" height="15.3" fill="#fbfbfb" stroke="#777"/><rect x="1" y="1" width="7.3" height="3" fill="#e4eaee"/><rect x="2" y="2" width="5" height="1" fill="#2a2a2a"/><rect x="1" y="5" width="7.3" height="1" fill="#c2c9d0"/><rect x="1" y="7" width="7.3" height="1" fill="#c2c9d0"/><rect x="1" y="9" width="7.3" height="1" fill="#c2c9d0"/><rect x="1" y="11" width="7.3" height="1" fill="#cdd2d6"/><rect x="2" y="13" width="1" height="1" fill="#3c4"/><line x1="14.40" y1="6.20" x2="15.40" y2="6.20" stroke="#5566c4" stroke-width="1.0"/><circle cx="15.40" cy="6.20" r="0.75" fill="#3a4fb0"/><line x1="13.93" y1="7.33" x2="14.64" y2="8.04" stroke="#5566c4" stroke-width="1.0"/><circle cx="14.64" cy="8.04" r="0.75" fill="#3a4fb0"/><line x1="12.80" y1="7.80" x2="12.80" y2="8.80" stroke="#5566c4" stroke-width="1.0"/><circle cx="12.80" cy="8.80" r="0.75" fill="#3a4fb0"/><line x1="11.67" y1="7.33" x2="10.96" y2="8.04" stroke="#5566c4" stroke-width="1.0"/><circle cx="10.96" cy="8.04" r="0.75" fill="#3a4fb0"/><line x1="11.20" y1="6.20" x2="10.20" y2="6.20" stroke="#5566c4" stroke-width="1.0"/><circle cx="10.20" cy="6.20" r="0.75" fill="#3a4fb0"/><line x1="11.67" y1="5.07" x2="10.96" y2="4.36" stroke="#5566c4" stroke-width="1.0"/><circle cx="10.96" cy="4.36" r="0.75" fill="#3a4fb0"/><line x1="12.80" y1="4.60" x2="12.80" y2="3.60" stroke="#5566c4" stroke-width="1.0"/><circle cx="12.80" cy="3.60" r="0.75" fill="#3a4fb0"/><line x1="13.93" y1="5.07" x2="14.64" y2="4.36" stroke="#5566c4" stroke-width="1.0"/><circle cx="14.64" cy="4.36" r="0.75" fill="#3a4fb0"/><circle cx="12.8" cy="6.2" r="1.6" fill="#9ca9e4" stroke="#3a4fb0" stroke-width="1.0"/><circle cx="12.8" cy="6.2" r="0.6" fill="#fff"/><line x1="10.80" y1="11.40" x2="12.00" y2="11.40" stroke="#5566c4" stroke-width="1.0"/><circle cx="12.00" cy="11.40" r="0.9" fill="#3a4fb0"/><line x1="10.13" y1="13.03" x2="10.97" y2="13.87" stroke="#5566c4" stroke-width="1.0"/><circle cx="10.97" cy="13.87" r="0.9" fill="#3a4fb0"/><line x1="8.50" y1="13.70" x2="8.50" y2="14.90" stroke="#5566c4" stroke-width="1.0"/><circle cx="8.50" cy="14.90" r="0.9" fill="#3a4fb0"/><line x1="6.87" y1="13.03" x2="6.03" y2="13.87" stroke="#5566c4" stroke-width="1.0"/><circle cx="6.03" cy="13.87" r="0.9" fill="#3a4fb0"/><line x1="6.20" y1="11.40" x2="5.00" y2="11.40" stroke="#5566c4" stroke-width="1.0"/><circle cx="5.00" cy="11.40" r="0.9" fill="#3a4fb0"/><line x1="6.87" y1="9.77" x2="6.03" y2="8.93" stroke="#5566c4" stroke-width="1.0"/><circle cx="6.03" cy="8.93" r="0.9" fill="#3a4fb0"/><line x1="8.50" y1="9.10" x2="8.50" y2="7.90" stroke="#5566c4" stroke-width="1.0"/><circle cx="8.50" cy="7.90" r="0.9" fill="#3a4fb0"/><line x1="10.13" y1="9.77" x2="10.97" y2="8.93" stroke="#5566c4" stroke-width="1.0"/><circle cx="10.97" cy="8.93" r="0.9" fill="#3a4fb0"/><circle cx="8.5" cy="11.4" r="2.3" fill="#95a3e2" stroke="#3a4fb0" stroke-width="1.3"/><circle cx="8.5" cy="11.4" r="0.75" fill="#fff"/></svg></div>
<div class="c c1" style="top:397px">Post to Yammer</div>
<div class="c c2" style="top:397px">Post To Yammer job</div>
<div class="c c4" style="top:397px">SYSTEM</div>
<div class="c c5" style="top:397px">12/1/2024 3:00 AM</div>
<div class="ic" style="top:422px"><svg width="16" height="16" viewBox="0 0 16 16"><rect x="0.5" y="0.5" width="8.3" height="15.3" fill="#fbfbfb" stroke="#777"/><rect x="1" y="1" width="7.3" height="3" fill="#e4eaee"/><rect x="2" y="2" width="5" height="1" fill="#2a2a2a"/><rect x="1" y="5" width="7.3" height="1" fill="#c2c9d0"/><rect x="1" y="7" width="7.3" height="1" fill="#c2c9d0"/><rect x="1" y="9" width="7.3" height="1" fill="#c2c9d0"/><rect x="1" y="11" width="7.3" height="1" fill="#cdd2d6"/><rect x="2" y="13" width="1" height="1" fill="#3c4"/><line x1="14.40" y1="6.20" x2="15.40" y2="6.20" stroke="#5566c4" stroke-width="1.0"/><circle cx="15.40" cy="6.20" r="0.75" fill="#3a4fb0"/><line x1="13.93" y1="7.33" x2="14.64" y2="8.04" stroke="#5566c4" stroke-width="1.0"/><circle cx="14.64" cy="8.04" r="0.75" fill="#3a4fb0"/><line x1="12.80" y1="7.80" x2="12.80" y2="8.80" stroke="#5566c4" stroke-width="1.0"/><circle cx="12.80" cy="8.80" r="0.75" fill="#3a4fb0"/><line x1="11.67" y1="7.33" x2="10.96" y2="8.04" stroke="#5566c4" stroke-width="1.0"/><circle cx="10.96" cy="8.04" r="0.75" fill="#3a4fb0"/><line x1="11.20" y1="6.20" x2="10.20" y2="6.20" stroke="#5566c4" stroke-width="1.0"/><circle cx="10.20" cy="6.20" r="0.75" fill="#3a4fb0"/><line x1="11.67" y1="5.07" x2="10.96" y2="4.36" stroke="#5566c4" stroke-width="1.0"/><circle cx="10.96" cy="4.36" r="0.75" fill="#3a4fb0"/><line x1="12.80" y1="4.60" x2="12.80" y2="3.60" stroke="#5566c4" stroke-width="1.0"/><circle cx="12.80" cy="3.60" r="0.75" fill="#3a4fb0"/><line x1="13.93" y1="5.07" x2="14.64" y2="4.36" stroke="#5566c4" stroke-width="1.0"/><circle cx="14.64" cy="4.36" r="0.75" fill="#3a4fb0"/><circle cx="12.8" cy="6.2" r="1.6" fill="#9ca9e4" stroke="#3a4fb0" stroke-width="1.0"/><circle cx="12.8" cy="6.2" r="0.6" fill="#fff"/><line x1="10.80" y1="11.40" x2="12.00" y2="11.40" stroke="#5566c4" stroke-width="1.0"/><circle cx="12.00" cy="11.40" r="0.9" fill="#3a4fb0"/><line x1="10.13" y1="13.03" x2="10.97" y2="13.87" stroke="#5566c4" stroke-width="1.0"/><circle cx="10.97" cy="13.87" r="0.9" fill="#3a4fb0"/><line x1="8.50" y1="13.70" x2="8.50" y2="14.90" stroke="#5566c4" stroke-width="1.0"/><circle cx="8.50" cy="14.90" r="0.9" fill="#3a4fb0"/><line x1="6.87" y1="13.03" x2="6.03" y2="13.87" stroke="#5566c4" stroke-width="1.0"/><circle cx="6.03" cy="13.87" r="0.9" fill="#3a4fb0"/><line x1="6.20" y1="11.40" x2="5.00" y2="11.40" stroke="#5566c4" stroke-width="1.0"/><circle cx="5.00" cy="11.40" r="0.9" fill="#3a4fb0"/><line x1="6.87" y1="9.77" x2="6.03" y2="8.93" stroke="#5566c4" stroke-width="1.0"/><circle cx="6.03" cy="8.93" r="0.9" fill="#3a4fb0"/><line x1="8.50" y1="9.10" x2="8.50" y2="7.90" stroke="#5566c4" stroke-width="1.0"/><circle cx="8.50" cy="7.90" r="0.9" fill="#3a4fb0"/><line x1="10.13" y1="9.77" x2="10.97" y2="8.93" stroke="#5566c4" stroke-width="1.0"/><circle cx="10.97" cy="8.93" r="0.9" fill="#3a4fb0"/><circle cx="8.5" cy="11.4" r="2.3" fill="#95a3e2" stroke="#3a4fb0" stroke-width="1.3"/><circle cx="8.5" cy="11.4" r="0.75" fill="#fff"/></svg></div>
<div class="c c1" style="top:426px">Organization Full Text Catalog...</div>
<div class="c c2" style="top:426px">Full Text Catalog job</div>
<div class="c c4" style="top:426px">SYSTEM</div>
<div class="c c5" style="top:426px">12/31/2014 3:00 AM</div>
<div class="ic" style="top:451px"><svg width="16" height="16" viewBox="0 0 16 16"><rect x="0.5" y="0.5" width="8.3" height="15.3" fill="#fbfbfb" stroke="#777"/><rect x="1" y="1" width="7.3" height="3" fill="#e4eaee"/><rect x="2" y="2" width="5" height="1" fill="#2a2a2a"/><rect x="1" y="5" width="7.3" height="1" fill="#c2c9d0"/><rect x="1" y="7" width="7.3" height="1" fill="#c2c9d0"/><rect x="1" y="9" width="7.3" height="1" fill="#c2c9d0"/><rect x="1" y="11" width="7.3" height="1" fill="#cdd2d6"/><rect x="2" y="13" width="1" height="1" fill="#3c4"/><line x1="14.40" y1="6.20" x2="15.40" y2="6.20" stroke="#5566c4" stroke-width="1.0"/><circle cx="15.40" cy="6.20" r="0.75" fill="#3a4fb0"/><line x1="13.93" y1="7.33" x2="14.64" y2="8.04" stroke="#5566c4" stroke-width="1.0"/><circle cx="14.64" cy="8.04" r="0.75" fill="#3a4fb0"/><line x1="12.80" y1="7.80" x2="12.80" y2="8.80" stroke="#5566c4" stroke-width="1.0"/><circle cx="12.80" cy="8.80" r="0.75" fill="#3a4fb0"/><line x1="11.67" y1="7.33" x2="10.96" y2="8.04" stroke="#5566c4" stroke-width="1.0"/><circle cx="10.96" cy="8.04" r="0.75" fill="#3a4fb0"/><line x1="11.20" y1="6.20" x2="10.20" y2="6.20" stroke="#5566c4" stroke-width="1.0"/><circle cx="10.20" cy="6.20" r="0.75" fill="#3a4fb0"/><line x1="11.67" y1="5.07" x2="10.96" y2="4.36" stroke="#5566c4" stroke-width="1.0"/><circle cx="10.96" cy="4.36" r="0.75" fill="#3a4fb0"/><line x1="12.80" y1="4.60" x2="12.80" y2="3.60" stroke="#5566c4" stroke-width="1.0"/><circle cx="12.80" cy="3.60" r="0.75" fill="#3a4fb0"/><line x1="13.93" y1="5.07" x2="14.64" y2="4.36" stroke="#5566c4" stroke-width="1.0"/><circle cx="14.64" cy="4.36" r="0.75" fill="#3a4fb0"/><circle cx="12.8" cy="6.2" r="1.6" fill="#9ca9e4" stroke="#3a4fb0" stroke-width="1.0"/><circle cx="12.8" cy="6.2" r="0.6" fill="#fff"/><line x1="10.80" y1="11.40" x2="12.00" y2="11.40" stroke="#5566c4" stroke-width="1.0"/><circle cx="12.00" cy="11.40" r="0.9" fill="#3a4fb0"/><line x1="10.13" y1="13.03" x2="10.97" y2="13.87" stroke="#5566c4" stroke-width="1.0"/><circle cx="10.97" cy="13.87" r="0.9" fill="#3a4fb0"/><line x1="8.50" y1="13.70" x2="8.50" y2="14.90" stroke="#5566c4" stroke-width="1.0"/><circle cx="8.50" cy="14.90" r="0.9" fill="#3a4fb0"/><line x1="6.87" y1="13.03" x2="6.03" y2="13.87" stroke="#5566c4" stroke-width="1.0"/><circle cx="6.03" cy="13.87" r="0.9" fill="#3a4fb0"/><line x1="6.20" y1="11.40" x2="5.00" y2="11.40" stroke="#5566c4" stroke-width="1.0"/><circle cx="5.00" cy="11.40" r="0.9" fill="#3a4fb0"/><line x1="6.87" y1="9.77" x2="6.03" y2="8.93" stroke="#5566c4" stroke-width="1.0"/><circle cx="6.03" cy="8.93" r="0.9" fill="#3a4fb0"/><line x1="8.50" y1="9.10" x2="8.50" y2="7.90" stroke="#5566c4" stroke-width="1.0"/><circle cx="8.50" cy="7.90" r="0.9" fill="#3a4fb0"/><line x1="10.13" y1="9.77" x2="10.97" y2="8.93" stroke="#5566c4" stroke-width="1.0"/><circle cx="10.97" cy="8.93" r="0.9" fill="#3a4fb0"/><circle cx="8.5" cy="11.4" r="2.3" fill="#95a3e2" stroke="#3a4fb0" stroke-width="1.3"/><circle cx="8.5" cy="11.4" r="0.75" fill="#fff"/></svg></div>
<div class="c c1" style="top:455px">Update Entitlement States</div>
<div class="c c2" style="top:455px">Update Entitlement States job</div>
<div class="c c4" style="top:455px">SYSTEM</div>
<div class="c c5" style="top:455px">12/31/2014 12:00 AM</div>
<div class="ic" style="top:480px"><svg width="16" height="16" viewBox="0 0 16 16"><rect x="0.5" y="0.5" width="8.3" height="15.3" fill="#fbfbfb" stroke="#777"/><rect x="1" y="1" width="7.3" height="3" fill="#e4eaee"/><rect x="2" y="2" width="5" height="1" fill="#2a2a2a"/><rect x="1" y="5" width="7.3" height="1" fill="#c2c9d0"/><rect x="1" y="7" width="7.3" height="1" fill="#c2c9d0"/><rect x="1" y="9" width="7.3" height="1" fill="#c2c9d0"/><rect x="1" y="11" width="7.3" height="1" fill="#cdd2d6"/><rect x="2" y="13" width="1" height="1" fill="#3c4"/><line x1="14.40" y1="6.20" x2="15.40" y2="6.20" stroke="#5566c4" stroke-width="1.0"/><circle cx="15.40" cy="6.20" r="0.75" fill="#3a4fb0"/><line x1="13.93" y1="7.33" x2="14.64" y2="8.04" stroke="#5566c4" stroke-width="1.0"/><circle cx="14.64" cy="8.04" r="0.75" fill="#3a4fb0"/><line x1="12.80" y1="7.80" x2="12.80" y2="8.80" stroke="#5566c4" stroke-width="1.0"/><circle cx="12.80" cy="8.80" r="0.75" fill="#3a4fb0"/><line x1="11.67" y1="7.33" x2="10.96" y2="8.04" stroke="#5566c4" stroke-width="1.0"/><circle cx="10.96" cy="8.04" r="0.75" fill="#3a4fb0"/><line x1="11.20" y1="6.20" x2="10.20" y2="6.20" stroke="#5566c4" stroke-width="1.0"/><circle cx="10.20" cy="6.20" r="0.75" fill="#3a4fb0"/><line x1="11.67" y1="5.07" x2="10.96" y2="4.36" stroke="#5566c4" stroke-width="1.0"/><circle cx="10.96" cy="4.36" r="0.75" fill="#3a4fb0"/><line x1="12.80" y1="4.60" x2="12.80" y2="3.60" stroke="#5566c4" stroke-width="1.0"/><circle cx="12.80" cy="3.60" r="0.75" fill="#3a4fb0"/><line x1="13.93" y1="5.07" x2="14.64" y2="4.36" stroke="#5566c4" stroke-width="1.0"/><circle cx="14.64" cy="4.36" r="0.75" fill="#3a4fb0"/><circle cx="12.8" cy="6.2" r="1.6" fill="#9ca9e4" stroke="#3a4fb0" stroke-width="1.0"/><circle cx="12.8" cy="6.2" r="0.6" fill="#fff"/><line x1="10.80" y1="11.40" x2="12.00" y2="11.40" stroke="#5566c4" stroke-width="1.0"/><circle cx="12.00" cy="11.40" r="0.9" fill="#3a4fb0"/><line x1="10.13" y1="13.03" x2="10.97" y2="13.87" stroke="#5566c4" stroke-width="1.0"/><circle cx="10.97" cy="13.87" r="0.9" fill="#3a4fb0"/><line x1="8.50" y1="13.70" x2="8.50" y2="14.90" stroke="#5566c4" stroke-width="1.0"/><circle cx="8.50" cy="14.90" r="0.9" fill="#3a4fb0"/><line x1="6.87" y1="13.03" x2="6.03" y2="13.87" stroke="#5566c4" stroke-width="1.0"/><circle cx="6.03" cy="13.87" r="0.9" fill="#3a4fb0"/><line x1="6.20" y1="11.40" x2="5.00" y2="11.40" stroke="#5566c4" stroke-width="1.0"/><circle cx="5.00" cy="11.40" r="0.9" fill="#3a4fb0"/><line x1="6.87" y1="9.77" x2="6.03" y2="8.93" stroke="#5566c4" stroke-width="1.0"/><circle cx="6.03" cy="8.93" r="0.9" fill="#3a4fb0"/><line x1="8.50" y1="9.10" x2="8.50" y2="7.90" stroke="#5566c4" stroke-width="1.0"/><circle cx="8.50" cy="7.90" r="0.9" fill="#3a4fb0"/><line x1="10.13" y1="9.77" x2="10.97" y2="8.93" stroke="#5566c4" stroke-width="1.0"/><circle cx="10.97" cy="8.93" r="0.9" fill="#3a4fb0"/><circle cx="8.5" cy="11.4" r="2.3" fill="#95a3e2" stroke="#3a4fb0" stroke-width="1.3"/><circle cx="8.5" cy="11.4" r="0.75" fill="#fff"/></svg></div>
<div class="c c1" style="top:484px">SQM Data Collection</div>
<div class="c c2" style="top:484px">SQM Data Collection</div>
<div class="c c4" style="top:484px">SYSTEM</div>
<div class="c c5" style="top:484px">12/24/2014 3:00 AM</div>
<div class="ic" style="top:509px"><svg width="16" height="16" viewBox="0 0 16 16"><rect x="0.5" y="0.5" width="8.3" height="15.3" fill="#fbfbfb" stroke="#777"/><rect x="1" y="1" width="7.3" height="3" fill="#e4eaee"/><rect x="2" y="2" width="5" height="1" fill="#2a2a2a"/><rect x="1" y="5" width="7.3" height="1" fill="#c2c9d0"/><rect x="1" y="7" width="7.3" height="1" fill="#c2c9d0"/><rect x="1" y="9" width="7.3" height="1" fill="#c2c9d0"/><rect x="1" y="11" width="7.3" height="1" fill="#cdd2d6"/><rect x="2" y="13" width="1" height="1" fill="#3c4"/><line x1="14.40" y1="6.20" x2="15.40" y2="6.20" stroke="#5566c4" stroke-width="1.0"/><circle cx="15.40" cy="6.20" r="0.75" fill="#3a4fb0"/><line x1="13.93" y1="7.33" x2="14.64" y2="8.04" stroke="#5566c4" stroke-width="1.0"/><circle cx="14.64" cy="8.04" r="0.75" fill="#3a4fb0"/><line x1="12.80" y1="7.80" x2="12.80" y2="8.80" stroke="#5566c4" stroke-width="1.0"/><circle cx="12.80" cy="8.80" r="0.75" fill="#3a4fb0"/><line x1="11.67" y1="7.33" x2="10.96" y2="8.04" stroke="#5566c4" stroke-width="1.0"/><circle cx="10.96" cy="8.04" r="0.75" fill="#3a4fb0"/><line x1="11.20" y1="6.20" x2="10.20" y2="6.20" stroke="#5566c4" stroke-width="1.0"/><circle cx="10.20" cy="6.20" r="0.75" fill="#3a4fb0"/><line x1="11.67" y1="5.07" x2="10.96" y2="4.36" stroke="#5566c4" stroke-width="1.0"/><circle cx="10.96" cy="4.36" r="0.75" fill="#3a4fb0"/><line x1="12.80" y1="4.60" x2="12.80" y2="3.60" stroke="#5566c4" stroke-width="1.0"/><circle cx="12.80" cy="3.60" r="0.75" fill="#3a4fb0"/><line x1="13.93" y1="5.07" x2="14.64" y2="4.36" stroke="#5566c4" stroke-width="1.0"/><circle cx="14.64" cy="4.36" r="0.75" fill="#3a4fb0"/><circle cx="12.8" cy="6.2" r="1.6" fill="#9ca9e4" stroke="#3a4fb0" stroke-width="1.0"/><circle cx="12.8" cy="6.2" r="0.6" fill="#fff"/><line x1="10.80" y1="11.40" x2="12.00" y2="11.40" stroke="#5566c4" stroke-width="1.0"/><circle cx="12.00" cy="11.40" r="0.9" fill="#3a4fb0"/><line x1="10.13" y1="13.03" x2="10.97" y2="13.87" stroke="#5566c4" stroke-width="1.0"/><circle cx="10.97" cy="13.87" r="0.9" fill="#3a4fb0"/><line x1="8.50" y1="13.70" x2="8.50" y2="14.90" stroke="#5566c4" stroke-width="1.0"/><circle cx="8.50" cy="14.90" r="0.9" fill="#3a4fb0"/><line x1="6.87" y1="13.03" x2="6.03" y2="13.87" stroke="#5566c4" stroke-width="1.0"/><circle cx="6.03" cy="13.87" r="0.9" fill="#3a4fb0"/><line x1="6.20" y1="11.40" x2="5.00" y2="11.40" stroke="#5566c4" stroke-width="1.0"/><circle cx="5.00" cy="11.40" r="0.9" fill="#3a4fb0"/><line x1="6.87" y1="9.77" x2="6.03" y2="8.93" stroke="#5566c4" stroke-width="1.0"/><circle cx="6.03" cy="8.93" r="0.9" fill="#3a4fb0"/><line x1="8.50" y1="9.10" x2="8.50" y2="7.90" stroke="#5566c4" stroke-width="1.0"/><circle cx="8.50" cy="7.90" r="0.9" fill="#3a4fb0"/><line x1="10.13" y1="9.77" x2="10.97" y2="8.93" stroke="#5566c4" stroke-width="1.0"/><circle cx="10.97" cy="8.93" r="0.9" fill="#3a4fb0"/><circle cx="8.5" cy="11.4" r="2.3" fill="#95a3e2" stroke="#3a4fb0" stroke-width="1.3"/><circle cx="8.5" cy="11.4" r="0.75" fill="#fff"/></svg></div>
<div class="c c1" style="top:513px">Goal Roll Up</div>
<div class="c c2" style="top:513px">Goal Rollup job</div>
<div class="c c4" style="top:513px">SYSTEM</div>
<div class="c c5" style="top:513px">12/24/2014 3:00 AM</div>
<div class="ic" style="top:538px"><svg width="16" height="16" viewBox="0 0 16 16"><rect x="0.5" y="0.5" width="8.3" height="15.3" fill="#fbfbfb" stroke="#777"/><rect x="1" y="1" width="7.3" height="3" fill="#e4eaee"/><rect x="2" y="2" width="5" height="1" fill="#2a2a2a"/><rect x="1" y="5" width="7.3" height="1" fill="#c2c9d0"/><rect x="1" y="7" width="7.3" height="1" fill="#c2c9d0"/><rect x="1" y="9" width="7.3" height="1" fill="#c2c9d0"/><rect x="1" y="11" width="7.3" height="1" fill="#cdd2d6"/><rect x="2" y="13" width="1" height="1" fill="#3c4"/><line x1="14.40" y1="6.20" x2="15.40" y2="6.20" stroke="#5566c4" stroke-width="1.0"/><circle cx="15.40" cy="6.20" r="0.75" fill="#3a4fb0"/><line x1="13.93" y1="7.33" x2="14.64" y2="8.04" stroke="#5566c4" stroke-width="1.0"/><circle cx="14.64" cy="8.04" r="0.75" fill="#3a4fb0"/><line x1="12.80" y1="7.80" x2="12.80" y2="8.80" stroke="#5566c4" stroke-width="1.0"/><circle cx="12.80" cy="8.80" r="0.75" fill="#3a4fb0"/><line x1="11.67" y1="7.33" x2="10.96" y2="8.04" stroke="#5566c4" stroke-width="1.0"/><circle cx="10.96" cy="8.04" r="0.75" fill="#3a4fb0"/><line x1="11.20" y1="6.20" x2="10.20" y2="6.20" stroke="#5566c4" stroke-width="1.0"/><circle cx="10.20" cy="6.20" r="0.75" fill="#3a4fb0"/><line x1="11.67" y1="5.07" x2="10.96" y2="4.36" stroke="#5566c4" stroke-width="1.0"/><circle cx="10.96" cy="4.36" r="0.75" fill="#3a4fb0"/><line x1="12.80" y1="4.60" x2="12.80" y2="3.60" stroke="#5566c4" stroke-width="1.0"/><circle cx="12.80" cy="3.60" r="0.75" fill="#3a4fb0"/><line x1="13.93" y1="5.07" x2="14.64" y2="4.36" stroke="#5566c4" stroke-width="1.0"/><circle cx="14.64" cy="4.36" r="0.75" fill="#3a4fb0"/><circle cx="12.8" cy="6.2" r="1.6" fill="#9ca9e4" stroke="#3a4fb0" stroke-width="1.0"/><circle cx="12.8" cy="6.2" r="0.6" fill="#fff"/><line x1="10.80" y1="11.40" x2="12.00" y2="11.40" stroke="#5566c4" stroke-width="1.0"/><circle cx="12.00" cy="11.40" r="0.9" fill="#3a4fb0"/><line x1="10.13" y1="13.03" x2="10.97" y2="13.87" stroke="#5566c4" stroke-width="1.0"/><circle cx="10.97" cy="13.87" r="0.9" fill="#3a4fb0"/><line x1="8.50" y1="13.70" x2="8.50" y2="14.90" stroke="#5566c4" stroke-width="1.0"/><circle cx="8.50" cy="14.90" r="0.9" fill="#3a4fb0"/><line x1="6.87" y1="13.03" x2="6.03" y2="13.87" stroke="#5566c4" stroke-width="1.0"/><circle cx="6.03" cy="13.87" r="0.9" fill="#3a4fb0"/><line x1="6.20" y1="11.40" x2="5.00" y2="11.40" stroke="#5566c4" stroke-width="1.0"/><circle cx="5.00" cy="11.40" r="0.9" fill="#3a4fb0"/><line x1="6.87" y1="9.77" x2="6.03" y2="8.93" stroke="#5566c4" stroke-width="1.0"/><circle cx="6.03" cy="8.93" r="0.9" fill="#3a4fb0"/><line x1="8.50" y1="9.10" x2="8.50" y2="7.90" stroke="#5566c4" stroke-width="1.0"/><circle cx="8.50" cy="7.90" r="0.9" fill="#3a4fb0"/><line x1="10.13" y1="9.77" x2="10.97" y2="8.93" stroke="#5566c4" stroke-width="1.0"/><circle cx="10.97" cy="8.93" r="0.9" fill="#3a4fb0"/><circle cx="8.5" cy="11.4" r="2.3" fill="#95a3e2" stroke="#3a4fb0" stroke-width="1.3"/><circle cx="8.5" cy="11.4" r="0.75" fill="#fff"/></svg></div>
<div class="c c1" style="top:542px">Bulk Delete</div>
<div class="c c2" style="top:542px">Delete completed system jobs</div>
<div class="c c4" style="top:542px">SYSTEM</div>
<div class="c c5" style="top:542px">12/23/2014 12:37 PM</div>
<div class="ic" style="top:567px"><svg width="16" height="16" viewBox="0 0 16 16"><rect x="0.5" y="0.5" width="8.3" height="15.3" fill="#fbfbfb" stroke="#777"/><rect x="1" y="1" width="7.3" height="3" fill="#e4eaee"/><rect x="2" y="2" width="5" height="1" fill="#2a2a2a"/><rect x="1" y="5" width="7.3" height="1" fill="#c2c9d0"/><rect x="1" y="7" width="7.3" height="1" fill="#c2c9d0"/><rect x="1" y="9" width="7.3" height="1" fill="#c2c9d0"/><rect x="1" y="11" width="7.3" height="1" fill="#cdd2d6"/><rect x="2" y="13" width="1" height="1" fill="#3c4"/><line x1="14.40" y1="6.20" x2="15.40" y2="6.20" stroke="#5566c4" stroke-width="1.0"/><circle cx="15.40" cy="6.20" r="0.75" fill="#3a4fb0"/><line x1="13.93" y1="7.33" x2="14.64" y2="8.04" stroke="#5566c4" stroke-width="1.0"/><circle cx="14.64" cy="8.04" r="0.75" fill="#3a4fb0"/><line x1="12.80" y1="7.80" x2="12.80" y2="8.80" stroke="#5566c4" stroke-width="1.0"/><circle cx="12.80" cy="8.80" r="0.75" fill="#3a4fb0"/><line x1="11.67" y1="7.33" x2="10.96" y2="8.04" stroke="#5566c4" stroke-width="1.0"/><circle cx="10.96" cy="8.04" r="0.75" fill="#3a4fb0"/><line x1="11.20" y1="6.20" x2="10.20" y2="6.20" stroke="#5566c4" stroke-width="1.0"/><circle cx="10.20" cy="6.20" r="0.75" fill="#3a4fb0"/><line x1="11.67" y1="5.07" x2="10.96" y2="4.36" stroke="#5566c4" stroke-width="1.0"/><circle cx="10.96" cy="4.36" r="0.75" fill="#3a4fb0"/><line x1="12.80" y1="4.60" x2="12.80" y2="3.60" stroke="#5566c4" stroke-width="1.0"/><circle cx="12.80" cy="3.60" r="0.75" fill="#3a4fb0"/><line x1="13.93" y1="5.07" x2="14.64" y2="4.36" stroke="#5566c4" stroke-width="1.0"/><circle cx="14.64" cy="4.36" r="0.75" fill="#3a4fb0"/><circle cx="12.8" cy="6.2" r="1.6" fill="#9ca9e4" stroke="#3a4fb0" stroke-width="1.0"/><circle cx="12.8" cy="6.2" r="0.6" fill="#fff"/><line x1="10.80" y1="11.40" x2="12.00" y2="11.40" stroke="#5566c4" stroke-width="1.0"/><circle cx="12.00" cy="11.40" r="0.9" fill="#3a4fb0"/><line x1="10.13" y1="13.03" x2="10.97" y2="13.87" stroke="#5566c4" stroke-width="1.0"/><circle cx="10.97" cy="13.87" r="0.9" fill="#3a4fb0"/><line x1="8.50" y1="13.70" x2="8.50" y2="14.90" stroke="#5566c4" stroke-width="1.0"/><circle cx="8.50" cy="14.90" r="0.9" fill="#3a4fb0"/><line x1="6.87" y1="13.03" x2="6.03" y2="13.87" stroke="#5566c4" stroke-width="1.0"/><circle cx="6.03" cy="13.87" r="0.9" fill="#3a4fb0"/><line x1="6.20" y1="11.40" x2="5.00" y2="11.40" stroke="#5566c4" stroke-width="1.0"/><circle cx="5.00" cy="11.40" r="0.9" fill="#3a4fb0"/><line x1="6.87" y1="9.77" x2="6.03" y2="8.93" stroke="#5566c4" stroke-width="1.0"/><circle cx="6.03" cy="8.93" r="0.9" fill="#3a4fb0"/><line x1="8.50" y1="9.10" x2="8.50" y2="7.90" stroke="#5566c4" stroke-width="1.0"/><circle cx="8.50" cy="7.90" r="0.9" fill="#3a4fb0"/><line x1="10.13" y1="9.77" x2="10.97" y2="8.93" stroke="#5566c4" stroke-width="1.0"/><circle cx="10.97" cy="8.93" r="0.9" fill="#3a4fb0"/><circle cx="8.5" cy="11.4" r="2.3" fill="#95a3e2" stroke="#3a4fb0" stroke-width="1.3"/><circle cx="8.5" cy="11.4" r="0.75" fill="#fff"/></svg></div>
<div class="c c1" style="top:571px">Bulk Delete</div>
<div class="c c2" style="top:571px;transform:scaleX(0.9851);transform-origin:0 0">Delete completed process sessions for Sync Workflows</div>
<div class="c c4" style="top:571px">SYSTEM</div>
<div class="c c5" style="top:571px">12/23/2014 12:37 PM</div>
<div class="ic" style="top:596px"><svg width="16" height="16" viewBox="0 0 16 16"><rect x="0.5" y="0.5" width="8.3" height="15.3" fill="#fbfbfb" stroke="#777"/><rect x="1" y="1" width="7.3" height="3" fill="#e4eaee"/><rect x="2" y="2" width="5" height="1" fill="#2a2a2a"/><rect x="1" y="5" width="7.3" height="1" fill="#c2c9d0"/><rect x="1" y="7" width="7.3" height="1" fill="#c2c9d0"/><rect x="1" y="9" width="7.3" height="1" fill="#c2c9d0"/><rect x="1" y="11" width="7.3" height="1" fill="#cdd2d6"/><rect x="2" y="13" width="1" height="1" fill="#3c4"/><line x1="14.40" y1="6.20" x2="15.40" y2="6.20" stroke="#5566c4" stroke-width="1.0"/><circle cx="15.40" cy="6.20" r="0.75" fill="#3a4fb0"/><line x1="13.93" y1="7.33" x2="14.64" y2="8.04" stroke="#5566c4" stroke-width="1.0"/><circle cx="14.64" cy="8.04" r="0.75" fill="#3a4fb0"/><line x1="12.80" y1="7.80" x2="12.80" y2="8.80" stroke="#5566c4" stroke-width="1.0"/><circle cx="12.80" cy="8.80" r="0.75" fill="#3a4fb0"/><line x1="11.67" y1="7.33" x2="10.96" y2="8.04" stroke="#5566c4" stroke-width="1.0"/><circle cx="10.96" cy="8.04" r="0.75" fill="#3a4fb0"/><line x1="11.20" y1="6.20" x2="10.20" y2="6.20" stroke="#5566c4" stroke-width="1.0"/><circle cx="10.20" cy="6.20" r="0.75" fill="#3a4fb0"/><line x1="11.67" y1="5.07" x2="10.96" y2="4.36" stroke="#5566c4" stroke-width="1.0"/><circle cx="10.96" cy="4.36" r="0.75" fill="#3a4fb0"/><line x1="12.80" y1="4.60" x2="12.80" y2="3.60" stroke="#5566c4" stroke-width="1.0"/><circle cx="12.80" cy="3.60" r="0.75" fill="#3a4fb0"/><line x1="13.93" y1="5.07" x2="14.64" y2="4.36" stroke="#5566c4" stroke-width="1.0"/><circle cx="14.64" cy="4.36" r="0.75" fill="#3a4fb0"/><circle cx="12.8" cy="6.2" r="1.6" fill="#9ca9e4" stroke="#3a4fb0" stroke-width="1.0"/><circle cx="12.8" cy="6.2" r="0.6" fill="#fff"/><line x1="10.80" y1="11.40" x2="12.00" y2="11.40" stroke="#5566c4" stroke-width="1.0"/><circle cx="12.00" cy="11.40" r="0.9" fill="#3a4fb0"/><line x1="10.13" y1="13.03" x2="10.97" y2="13.87" stroke="#5566c4" stroke-width="1.0"/><circle cx="10.97" cy="13.87" r="0.9" fill="#3a4fb0"/><line x1="8.50" y1="13.70" x2="8.50" y2="14.90" stroke="#5566c4" stroke-width="1.0"/><circle cx="8.50" cy="14.90" r="0.9" fill="#3a4fb0"/><line x1="6.87" y1="13.03" x2="6.03" y2="13.87" stroke="#5566c4" stroke-width="1.0"/><circle cx="6.03" cy="13.87" r="0.9" fill="#3a4fb0"/><line x1="6.20" y1="11.40" x2="5.00" y2="11.40" stroke="#5566c4" stroke-width="1.0"/><circle cx="5.00" cy="11.40" r="0.9" fill="#3a4fb0"/><line x1="6.87" y1="9.77" x2="6.03" y2="8.93" stroke="#5566c4" stroke-width="1.0"/><circle cx="6.03" cy="8.93" r="0.9" fill="#3a4fb0"/><line x1="8.50" y1="9.10" x2="8.50" y2="7.90" stroke="#5566c4" stroke-width="1.0"/><circle cx="8.50" cy="7.90" r="0.9" fill="#3a4fb0"/><line x1="10.13" y1="9.77" x2="10.97" y2="8.93" stroke="#5566c4" stroke-width="1.0"/><circle cx="10.97" cy="8.93" r="0.9" fill="#3a4fb0"/><circle cx="8.5" cy="11.4" r="2.3" fill="#95a3e2" stroke="#3a4fb0" stroke-width="1.3"/><circle cx="8.5" cy="11.4" r="0.75" fill="#fff"/></svg></div>
<div class="c c1" style="top:600px;transform:scaleX(0.9762);transform-origin:0 0">Calculate Rollup Field</div>
<div class="c c2" style="top:600px;transform:scaleX(1.0291);transform-origin:0 0">Calculate rollup fields for the opportunity entity</div>
<div class="c c4" style="top:600px">SYSTEM</div>
<div class="c c5" style="top:600px">12/23/2014 8:22 AM</div>
<div class="ic" style="top:625px"><svg width="16" height="16" viewBox="0 0 16 16"><rect x="0.5" y="0.5" width="8.3" height="15.3" fill="#fbfbfb" stroke="#777"/><rect x="1" y="1" width="7.3" height="3" fill="#e4eaee"/><rect x="2" y="2" width="5" height="1" fill="#2a2a2a"/><rect x="1" y="5" width="7.3" height="1" fill="#c2c9d0"/><rect x="1" y="7" width="7.3" height="1" fill="#c2c9d0"/><rect x="1" y="9" width="7.3" height="1" fill="#c2c9d0"/><rect x="1" y="11" width="7.3" height="1" fill="#cdd2d6"/><rect x="2" y="13" width="1" height="1" fill="#3c4"/><line x1="14.40" y1="6.20" x2="15.40" y2="6.20" stroke="#5566c4" stroke-width="1.0"/><circle cx="15.40" cy="6.20" r="0.75" fill="#3a4fb0"/><line x1="13.93" y1="7.33" x2="14.64" y2="8.04" stroke="#5566c4" stroke-width="1.0"/><circle cx="14.64" cy="8.04" r="0.75" fill="#3a4fb0"/><line x1="12.80" y1="7.80" x2="12.80" y2="8.80" stroke="#5566c4" stroke-width="1.0"/><circle cx="12.80" cy="8.80" r="0.75" fill="#3a4fb0"/><line x1="11.67" y1="7.33" x2="10.96" y2="8.04" stroke="#5566c4" stroke-width="1.0"/><circle cx="10.96" cy="8.04" r="0.75" fill="#3a4fb0"/><line x1="11.20" y1="6.20" x2="10.20" y2="6.20" stroke="#5566c4" stroke-width="1.0"/><circle cx="10.20" cy="6.20" r="0.75" fill="#3a4fb0"/><line x1="11.67" y1="5.07" x2="10.96" y2="4.36" stroke="#5566c4" stroke-width="1.0"/><circle cx="10.96" cy="4.36" r="0.75" fill="#3a4fb0"/><line x1="12.80" y1="4.60" x2="12.80" y2="3.60" stroke="#5566c4" stroke-width="1.0"/><circle cx="12.80" cy="3.60" r="0.75" fill="#3a4fb0"/><line x1="13.93" y1="5.07" x2="14.64" y2="4.36" stroke="#5566c4" stroke-width="1.0"/><circle cx="14.64" cy="4.36" r="0.75" fill="#3a4fb0"/><circle cx="12.8" cy="6.2" r="1.6" fill="#9ca9e4" stroke="#3a4fb0" stroke-width="1.0"/><circle cx="12.8" cy="6.2" r="0.6" fill="#fff"/><line x1="10.80" y1="11.40" x2="12.00" y2="11.40" stroke="#5566c4" stroke-width="1.0"/><circle cx="12.00" cy="11.40" r="0.9" fill="#3a4fb0"/><line x1="10.13" y1="13.03" x2="10.97" y2="13.87" stroke="#5566c4" stroke-width="1.0"/><circle cx="10.97" cy="13.87" r="0.9" fill="#3a4fb0"/><line x1="8.50" y1="13.70" x2="8.50" y2="14.90" stroke="#5566c4" stroke-width="1.0"/><circle cx="8.50" cy="14.90" r="0.9" fill="#3a4fb0"/><line x1="6.87" y1="13.03" x2="6.03" y2="13.87" stroke="#5566c4" stroke-width="1.0"/><circle cx="6.03" cy="13.87" r="0.9" fill="#3a4fb0"/><line x1="6.20" y1="11.40" x2="5.00" y2="11.40" stroke="#5566c4" stroke-width="1.0"/><circle cx="5.00" cy="11.40" r="0.9" fill="#3a4fb0"/><line x1="6.87" y1="9.77" x2="6.03" y2="8.93" stroke="#5566c4" stroke-width="1.0"/><circle cx="6.03" cy="8.93" r="0.9" fill="#3a4fb0"/><line x1="8.50" y1="9.10" x2="8.50" y2="7.90" stroke="#5566c4" stroke-width="1.0"/><circle cx="8.50" cy="7.90" r="0.9" fill="#3a4fb0"/><line x1="10.13" y1="9.77" x2="10.97" y2="8.93" stroke="#5566c4" stroke-width="1.0"/><circle cx="10.97" cy="8.93" r="0.9" fill="#3a4fb0"/><circle cx="8.5" cy="11.4" r="2.3" fill="#95a3e2" stroke="#3a4fb0" stroke-width="1.3"/><circle cx="8.5" cy="11.4" r="0.75" fill="#fff"/></svg></div>
<div class="c c1" style="top:629px;transform:scaleX(0.9762);transform-origin:0 0">Calculate Rollup Field</div>
<div class="c c2" style="top:629px;transform:scaleX(1.0120);transform-origin:0 0">Calculate rollup fields for the account entity</div>
<div class="c c4" style="top:629px">SYSTEM</div>
<div class="c c5" style="top:629px">12/23/2014 7:38 AM</div>
<div class="selbg" style="top:649px"></div>
<svg class="rchk" style="top:659px" width="11" height="9" viewBox="0 0 11 9"><path d="M0.8 4.2l3.4 3.6L10.4 1" fill="none" stroke="#444" stroke-width="1.2"/></svg>
<div class="ic" style="top:654px"><svg width="16" height="16" viewBox="0 0 16 16"><rect x="0.5" y="0.5" width="8.3" height="15.3" fill="#fbfbfb" stroke="#777"/><rect x="1" y="1" width="7.3" height="3" fill="#e4eaee"/><rect x="2" y="2" width="5" height="1" fill="#2a2a2a"/><rect x="1" y="5" width="7.3" height="1" fill="#c2c9d0"/><rect x="1" y="7" width="7.3" height="1" fill="#c2c9d0"/><rect x="1" y="9" width="7.3" height="1" fill="#c2c9d0"/><rect x="1" y="11" width="7.3" height="1" fill="#cdd2d6"/><rect x="2" y="13" width="1" height="1" fill="#3c4"/><line x1="14.40" y1="6.20" x2="15.40" y2="6.20" stroke="#5566c4" stroke-width="1.0"/><circle cx="15.40" cy="6.20" r="0.75" fill="#3a4fb0"/><line x1="13.93" y1="7.33" x2="14.64" y2="8.04" stroke="#5566c4" stroke-width="1.0"/><circle cx="14.64" cy="8.04" r="0.75" fill="#3a4fb0"/><line x1="12.80" y1="7.80" x2="12.80" y2="8.80" stroke="#5566c4" stroke-width="1.0"/><circle cx="12.80" cy="8.80" r="0.75" fill="#3a4fb0"/><line x1="11.67" y1="7.33" x2="10.96" y2="8.04" stroke="#5566c4" stroke-width="1.0"/><circle cx="10.96" cy="8.04" r="0.75" fill="#3a4fb0"/><line x1="11.20" y1="6.20" x2="10.20" y2="6.20" stroke="#5566c4" stroke-width="1.0"/><circle cx="10.20" cy="6.20" r="0.75" fill="#3a4fb0"/><line x1="11.67" y1="5.07" x2="10.96" y2="4.36" stroke="#5566c4" stroke-width="1.0"/><circle cx="10.96" cy="4.36" r="0.75" fill="#3a4fb0"/><line x1="12.80" y1="4.60" x2="12.80" y2="3.60" stroke="#5566c4" stroke-width="1.0"/><circle cx="12.80" cy="3.60" r="0.75" fill="#3a4fb0"/><line x1="13.93" y1="5.07" x2="14.64" y2="4.36" stroke="#5566c4" stroke-width="1.0"/><circle cx="14.64" cy="4.36" r="0.75" fill="#3a4fb0"/><circle cx="12.8" cy="6.2" r="1.6" fill="#9ca9e4" stroke="#3a4fb0" stroke-width="1.0"/><circle cx="12.8" cy="6.2" r="0.6" fill="#fff"/><line x1="10.80" y1="11.40" x2="12.00" y2="11.40" stroke="#5566c4" stroke-width="1.0"/><circle cx="12.00" cy="11.40" r="0.9" fill="#3a4fb0"/><line x1="10.13" y1="13.03" x2="10.97" y2="13.87" stroke="#5566c4" stroke-width="1.0"/><circle cx="10.97" cy="13.87" r="0.9" fill="#3a4fb0"/><line x1="8.50" y1="13.70" x2="8.50" y2="14.90" stroke="#5566c4" stroke-width="1.0"/><circle cx="8.50" cy="14.90" r="0.9" fill="#3a4fb0"/><line x1="6.87" y1="13.03" x2="6.03" y2="13.87" stroke="#5566c4" stroke-width="1.0"/><circle cx="6.03" cy="13.87" r="0.9" fill="#3a4fb0"/><line x1="6.20" y1="11.40" x2="5.00" y2="11.40" stroke="#5566c4" stroke-width="1.0"/><circle cx="5.00" cy="11.40" r="0.9" fill="#3a4fb0"/><line x1="6.87" y1="9.77" x2="6.03" y2="8.93" stroke="#5566c4" stroke-width="1.0"/><circle cx="6.03" cy="8.93" r="0.9" fill="#3a4fb0"/><line x1="8.50" y1="9.10" x2="8.50" y2="7.90" stroke="#5566c4" stroke-width="1.0"/><circle cx="8.50" cy="7.90" r="0.9" fill="#3a4fb0"/><line x1="10.13" y1="9.77" x2="10.97" y2="8.93" stroke="#5566c4" stroke-width="1.0"/><circle cx="10.97" cy="8.93" r="0.9" fill="#3a4fb0"/><circle cx="8.5" cy="11.4" r="2.3" fill="#95a3e2" stroke="#3a4fb0" stroke-width="1.3"/><circle cx="8.5" cy="11.4" r="0.75" fill="#fff"/></svg></div>
<div class="c c1" style="top:658px;transform:scaleX(0.9856);transform-origin:0 0">Calculate Rollup Field</div>
<div class="c c2" style="top:658px;transform:scaleX(1.0122);transform-origin:0 0">Calculate rollup fields for the contact entity</div>
<div class="c c4 und" style="top:658px">SYSTEM</div>
<div class="c c5" style="top:658px">12/23/2014 7:30 AM</div>

<div class="red" style="left:2px;top:643px;width:710px;height:45px"></div>
<div class="red" style="left:827px;top:644px;width:164px;height:38px"></div>
</div></body></html>
